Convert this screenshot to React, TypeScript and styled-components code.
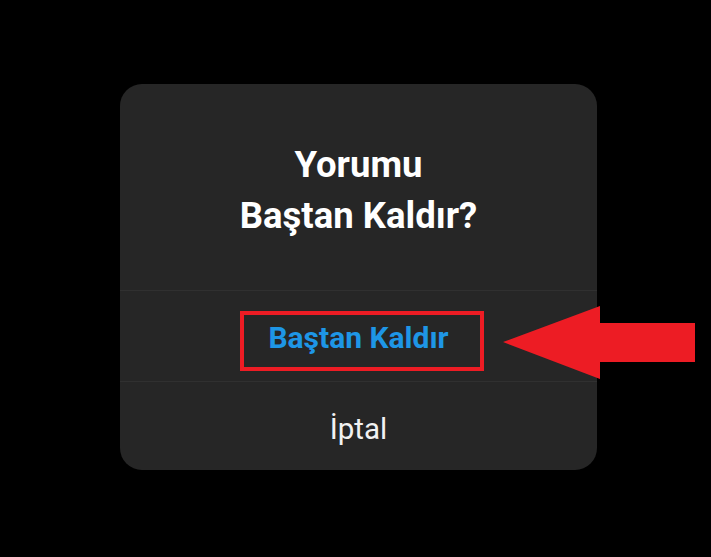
import styled, { createGlobalStyle } from 'styled-components';

const GlobalStyle = createGlobalStyle`
	html, body {
		margin: 0;
		padding: 0;
		background: #000;
	}
	body {
		font-family: Roboto, 'Noto Sans', 'Liberation Sans', sans-serif;
		-webkit-font-smoothing: antialiased;
	}
`;

const Screen = styled.div`
	position: relative;
	width: 711px;
	height: 557px;
	background: #000;
	padding: 84px 0 0 120px;
	box-sizing: border-box;
`;

const Dialog = styled.div`
	width: 477px;
	height: 386px;
	background: #262626;
	border-radius: 22px;
	display: flex;
	flex-direction: column;
	overflow: hidden;
`;

const Header = styled.div`
	height: 206px;
	display: flex;
	align-items: center;
	justify-content: center;
	padding-top: 6px;
	box-sizing: border-box;
`;

const Title = styled.h2`
	margin: 0;
	color: #fff;
	font-size: 36.5px;
	font-weight: 700;
	line-height: 51px;
	text-align: center;
`;

const Action = styled.div<{ $height: number }>`
	height: ${p => p.$height}px;
	display: flex;
	align-items: center;
	justify-content: center;
	border-top: 1px solid #303030;
	box-sizing: border-box;
`;

const Highlight = styled.div`
	display: flex;
	align-items: center;
	justify-content: center;
	width: 244px;
	height: 60px;
	box-sizing: border-box;
	border: 4px solid #ed1c24;
	padding-bottom: 8px;
	margin-left: 7px;
	margin-top: 10px;
`;

const ActionLabel = styled.span<{ $tone: 'danger' | 'plain' }>`
	font-size: ${p => (p.$tone === 'danger' ? '30px' : '29.5px')};
	font-weight: ${p => (p.$tone === 'danger' ? 700 : 400)};
	color: ${p => (p.$tone === 'danger' ? '#1e96e6' : '#f2f2f2')};
	margin-left: ${p => (p.$tone === 'danger' ? '-7px' : '0')};
	margin-top: ${p => (p.$tone === 'plain' ? '5px' : '0')};
`;

const Pointer = styled.svg`
	position: absolute;
	left: 503px;
	top: 306px;
`;

export default function App() {
	return (
		<>
			<GlobalStyle />
			<Screen>
				<Dialog>
					<Header>
						<Title>
							Yorumu
							<br />
							Baştan Kaldır?
						</Title>
					</Header>
					<Action $height={91}>
						<Highlight>
							<ActionLabel $tone="danger">Baştan Kaldır</ActionLabel>
						</Highlight>
					</Action>
					<Action $height={89}>
						<ActionLabel $tone="plain">İptal</ActionLabel>
					</Action>
				</Dialog>
				{/* red arrow pointing at the remove button */}
				<Pointer width="192" height="74" viewBox="0 0 192 74">
					<polygon
						points="0,36 97,0 97,17 192,17 192,56 97,56 97,73"
						fill="#ed1c24"
					/>
				</Pointer>
			</Screen>
		</>
	);
}
